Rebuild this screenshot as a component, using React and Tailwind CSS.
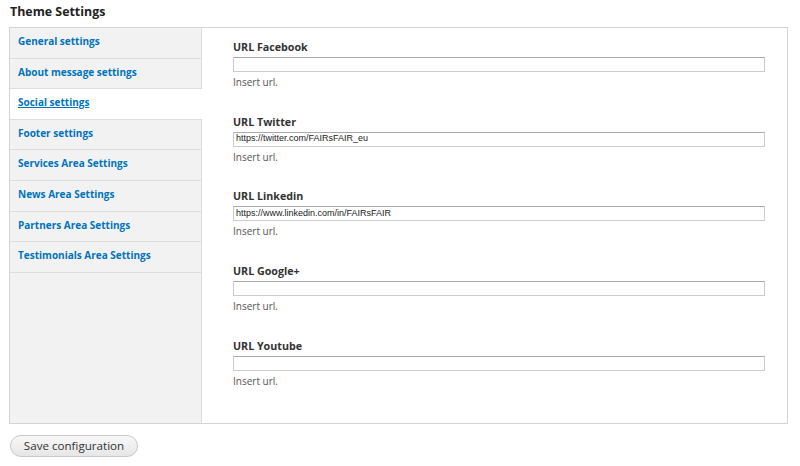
import React from "react";

const tabs = [
  "General settings",
  "About message settings",
  "Social settings",
  "Footer settings",
  "Services Area Settings",
  "News Area Settings",
  "Partners Area Settings",
  "Testimonials Area Settings",
];

const fields = [
  { label: "URL Facebook", value: "" },
  { label: "URL Twitter", value: "https://twitter.com/FAIRsFAIR_eu" },
  { label: "URL Linkedin", value: "https://www.linkedin.com/in/FAIRsFAIR" },
  { label: "URL Google+", value: "" },
  { label: "URL Youtube", value: "" },
];

export default function App() {
  return (
    <div className="w-[800px] h-[466px] bg-white text-[#333] font-['Open_Sans',sans-serif] overflow-hidden">
      <div className="pl-[10px] pt-[3px] h-[27px] text-[12.4px] font-bold leading-[17px] text-[#222]">Theme Settings</div>
      <div className="ml-[9px] w-[779px] h-[397px] border border-[#d4d4d4] flex">
        <div className="w-[192px] shrink-0 flex flex-col">
          {tabs.map((t, i) => {
            const active = i === 2;
            return (
              <div
                key={t}
                className={
                  "h-[30.6px] border-b border-[#ddd] pt-[6px] pl-[8px] text-[10px] leading-[15px] font-bold text-[#0074bd] " +
                  (active ? "bg-white underline" : "bg-[#f2f2f2] border-r")
                }
              >
                {t}
              </div>
            );
          })}
          <div className="flex-1 bg-[#f2f2f2] border-r border-[#ddd]" />
        </div>
        <div className="flex-1 pl-[31px] pt-[11px]">
          {fields.map((f) => (
            <div key={f.label} className="h-[74.7px]">
              <div className="text-[10.7px] font-bold leading-[16px] text-[#333]">{f.label}</div>
              <div className="mt-[2px] w-[532px] h-[15px] border border-[#ccc] border-t-[#aaa] bg-white flex items-center pl-[2px] text-[9px] font-['Liberation_Sans',sans-serif] text-[#222]">
                {f.value}
              </div>
              <div className="mt-[3px] text-[10px] leading-[14px] text-[#555]">Insert url.</div>
            </div>
          ))}
        </div>
      </div>
      <div className="pl-[10px] pt-[8px]">
        <button className="w-[128px] h-[22px] rounded-full border border-[#c8c8c8] bg-gradient-to-b from-[#f8f8f8] to-[#e6e6e6] text-[11.6px] text-[#333] font-['Open_Sans',sans-serif] leading-none">
          Save configuration
        </button>
      </div>
    </div>
  );
}
